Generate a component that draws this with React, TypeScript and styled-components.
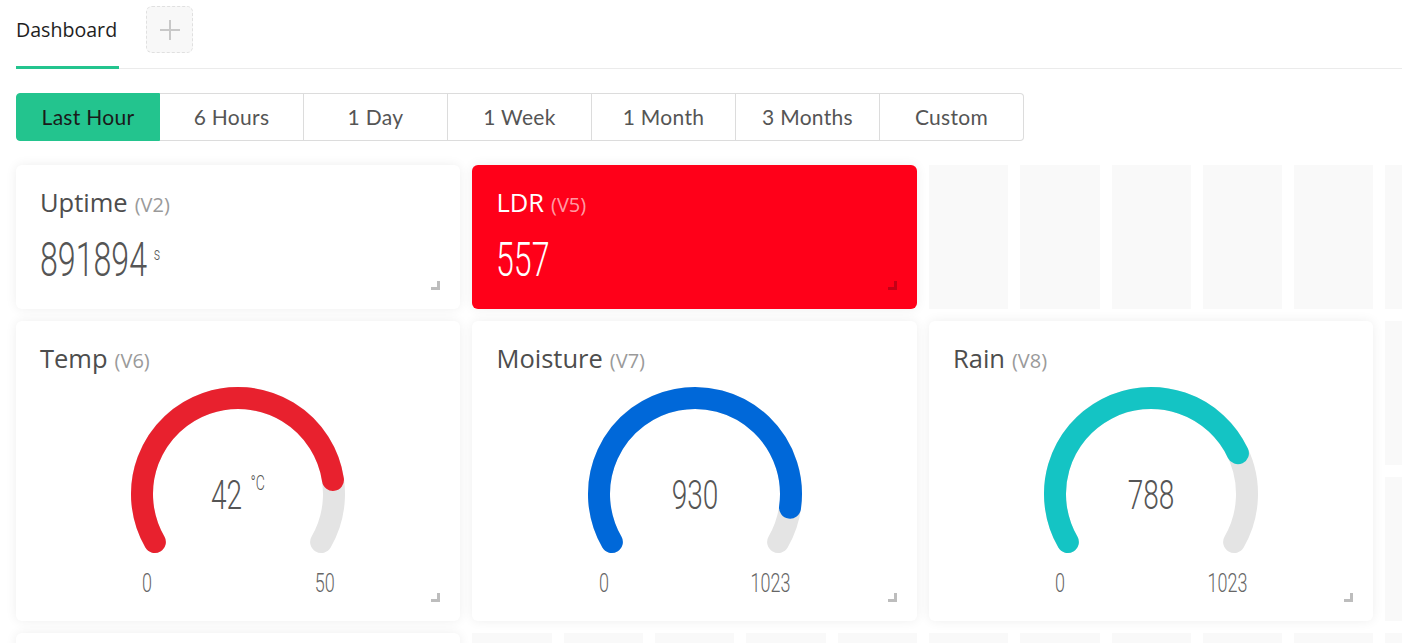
import React from "react";
import styled, { createGlobalStyle } from "styled-components";

const GlobalStyle = createGlobalStyle`
  html, body { margin: 0; padding: 0; background: #ffffff; }
  body { font-family: "Open Sans", "Noto Sans", sans-serif; overflow: hidden; }
  * { box-sizing: border-box; }
`;

const Page = styled.div`
  width: 1402px;
  height: 643px;
  overflow: hidden;
  padding-left: 16px;
`;

const Header = styled.div`
  display: flex;
  align-items: flex-start;
  height: 69px;
  border-bottom: 1px solid #ebebeb;
`;

const Tab = styled.div`
  height: 69px;
  margin-bottom: -1px;
  padding: 17px 2px 0 0;
  font-size: 19.6px;
  line-height: 26px;
  color: #1e1e1e;
  border-bottom: 3px solid #23c48e;
`;

const AddButton = styled.div`
  width: 47px;
  height: 47px;
  margin: 6px 0 0 27px;
  border: 1px dashed #e0e0e0;
  border-radius: 6px;
  background: #f8f8f8;
  display: flex;
  align-items: center;
  justify-content: center;
`;

const RangeBar = styled.div`
  display: flex;
  margin-top: 24px;
`;

const RangeButton = styled.div<{ $active?: boolean; $first?: boolean; $last?: boolean }>`
  width: 144px;
  height: 48px;
  display: flex;
  align-items: center;
  justify-content: center;
  padding-bottom: 2px;
  font-family: Lato, "Open Sans", sans-serif;
  font-size: 21px;
  letter-spacing: 0.3px;
  color: ${(p) => (p.$active ? "#1a1a1a" : "#555555")};
  background: ${(p) => (p.$active ? "#23c48e" : "#ffffff")};
  border: 1px solid ${(p) => (p.$active ? "#23c48e" : "#dcdcdc")};
  border-left-width: ${(p) => (p.$first ? "1px" : "0")};
  border-radius: ${(p) => (p.$first ? "4px 0 0 4px" : p.$last ? "0 4px 4px 0" : "0")};
`;

const Grid = styled.div`
  margin-top: 24px;
  display: grid;
  grid-template-columns: repeat(16, 79.3px);
  grid-auto-rows: 144px;
  gap: 12px;
`;

const Cell = styled.div<{ $col: string; $row: string }>`
  grid-column: ${(p) => p.$col};
  grid-row: ${(p) => p.$row};
`;

const Placeholder = styled(Cell)`
  background: #f9f9f9;
`;

const Card = styled(Cell)<{ $bg?: string }>`
  position: relative;
  background: ${(p) => p.$bg || "#ffffff"};
  border-radius: 6px;
  box-shadow: 0 0 12px rgba(0, 0, 0, 0.07);
  padding: 23px 24px 0;
`;

const Title = styled.div<{ $light?: boolean }>`
  font-size: 25.5px;
  line-height: 28px;
  color: ${(p) => (p.$light ? "#ffffff" : "#4d4d4d")};
  white-space: nowrap;
`;

const Pin = styled.span<{ $light?: boolean }>`
  font-size: 20px;
  color: ${(p) => (p.$light ? "rgba(255,255,255,0.62)" : "#9a9a9a")};
  margin-left: 7px;
`;

const ValueRow = styled.div<{ $light?: boolean }>`
  margin-top: 17px;
  white-space: nowrap;
  font-family: Roboto, sans-serif;
  font-weight: 300;
  font-size: 48px;
  line-height: 48px;
  color: ${(p) => (p.$light ? "#ffffff" : "#555555")};
  transform: scaleX(0.67);
  transform-origin: left center;
`;

const Unit = styled.sup`
  font-size: 19px;
  vertical-align: top;
  line-height: 19px;
  margin-left: 10px;
  position: relative;
  top: 8px;
`;

const Handle = styled.div<{ $color: string }>`
  position: absolute;
  right: 20px;
  bottom: 19px;
  width: 9px;
  height: 9px;
  border-right: 3px solid ${(p) => p.$color};
  border-bottom: 3px solid ${(p) => p.$color};
`;

const GaugeWrap = styled.div`
  position: relative;
  width: 216px;
  height: 170px;
  margin: 11px auto 0;
`;

const GaugeValue = styled.div`
  position: absolute;
  left: 0;
  right: 0;
  top: 110px;
  transform: translateY(-50%) scaleX(0.7);
  transform-origin: center center;
  text-align: center;
  white-space: nowrap;
  font-family: Roboto, sans-serif;
  font-weight: 300;
  font-size: 40px;
  line-height: 40px;
  color: #555555;
`;

const GaugeUnit = styled.sup`
  font-size: 20px;
  line-height: 20px;
  vertical-align: top;
  margin-left: 12px;
  position: relative;
  top: -3px;
`;

const Labels = styled.div`
  width: 192px;
  margin: 15px auto 0;
  display: flex;
  justify-content: space-between;
  font-family: Roboto, sans-serif;
  font-weight: 300;
  font-size: 25px;
  line-height: 25px;
  color: #666666;
`;

const Label = styled.span<{ $right?: boolean }>`
  display: inline-block;
  transform: scaleX(0.72);
  transform-origin: ${(p) => (p.$right ? "right" : "left")} center;
`;

const CX = 108;
const CY = 108;
const R = 96;

function pt(a: number) {
  const rad = (a * Math.PI) / 180;
  return [CX + R * Math.cos(rad), CY - R * Math.sin(rad)];
}

function arc(sweep: number) {
  const [x1, y1] = pt(210);
  const [x2, y2] = pt(210 - sweep);
  const large = sweep > 180 ? 1 : 0;
  return `M ${x1.toFixed(2)} ${y1.toFixed(2)} A ${R} ${R} 0 ${large} 1 ${x2.toFixed(2)} ${y2.toFixed(2)}`;
}

type GaugeProps = {
  col: string;
  title: string;
  pin: string;
  value: number;
  max: number;
  unit?: string;
  color: string;
};

function Gauge({ col, title, pin, value, max, unit, color }: GaugeProps) {
  const sweep = (240 * value) / max;
  return (
    <Card $col={col} $row="2 / span 2">
      <Title>
        {title}
        <Pin>({pin})</Pin>
      </Title>
      <GaugeWrap>
        <svg width="216" height="170" viewBox="0 0 216 170">
          <path d={arc(240)} fill="none" stroke="#e4e4e4" strokeWidth="22" strokeLinecap="round" />
          <path d={arc(sweep)} fill="none" stroke={color} strokeWidth="22" strokeLinecap="round" />
        </svg>
        <GaugeValue>
          {value}
          {unit && <GaugeUnit>{unit}</GaugeUnit>}
        </GaugeValue>
      </GaugeWrap>
      <Labels>
        <Label>0</Label>
        <Label $right>{max}</Label>
      </Labels>
      <Handle $color="#bdbdbd" />
    </Card>
  );
}

const ranges = ["Last Hour", "6 Hours", "1 Day", "1 Week", "1 Month", "3 Months", "Custom"];

export default function App() {
  const row1Empty = [11, 12, 13, 14, 15, 16];
  const row4Empty = [6, 7, 8, 9, 10, 11, 12, 13, 14, 15, 16];
  return (
    <Page>
      <GlobalStyle />
      <Header>
        <Tab>Dashboard</Tab>
        <AddButton>
          <svg width="22" height="22" viewBox="0 0 22 22">
            <path d="M11 1 V21 M1 11 H21" stroke="#c8c8c8" strokeWidth="2" />
          </svg>
        </AddButton>
      </Header>
      <RangeBar>
        {ranges.map((r, i) => (
          <RangeButton key={r} $active={i === 0} $first={i === 0} $last={i === ranges.length - 1}>
            {r}
          </RangeButton>
        ))}
      </RangeBar>
      <Grid>
        <Card $col="1 / span 5" $row="1">
          <Title>
            Uptime<Pin>(V2)</Pin>
          </Title>
          <ValueRow>
            891894<Unit>s</Unit>
          </ValueRow>
          <Handle $color="#bdbdbd" />
        </Card>
        <Card $col="6 / span 5" $row="1" $bg="#ff0019">
          <Title $light>
            LDR<Pin $light>(V5)</Pin>
          </Title>
          <ValueRow $light>557</ValueRow>
          <Handle $color="#c40016" />
        </Card>
        {row1Empty.map((c) => (
          <Placeholder key={"a" + c} $col={String(c)} $row="1" />
        ))}
        <Gauge col="1 / span 5" title="Temp" pin="V6" value={42} max={50} unit="°C" color="#e8212e" />
        <Gauge col="6 / span 5" title="Moisture" pin="V7" value={930} max={1023} color="#0068d9" />
        <Gauge col="11 / span 5" title="Rain" pin="V8" value={788} max={1023} color="#14c4c4" />
        <Placeholder $col="16" $row="2" />
        <Placeholder $col="16" $row="3" />
        <Card $col="1 / span 5" $row="4" />
        {row4Empty.map((c) => (
          <Placeholder key={"b" + c} $col={String(c)} $row="4" />
        ))}
      </Grid>
    </Page>
  );
}
